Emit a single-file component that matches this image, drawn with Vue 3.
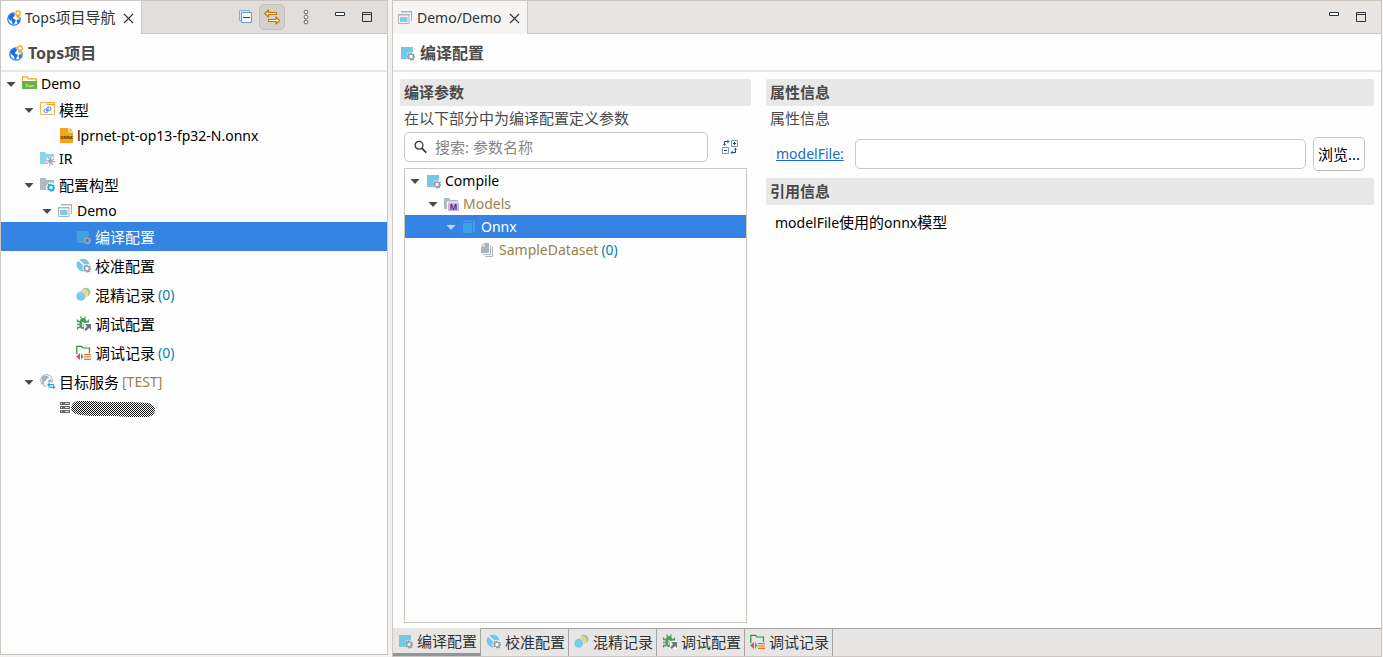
<script setup>
import { ref } from 'vue'

const projectTree = [
  { level: 0, open: true, icon: 'tops', label: 'Demo' },
  { level: 1, open: true, icon: 'model', label: '模型' },
  { level: 2, icon: 'onnx', label: 'lprnet-pt-op13-fp32-N.onnx' },
  { level: 1, icon: 'ir', label: 'IR' },
  { level: 1, open: true, icon: 'config', label: '配置构型' },
  { level: 2, open: true, icon: 'windows', label: 'Demo' },
  { level: 3, icon: 'compile', label: '编译配置', selected: true },
  { level: 3, icon: 'calibrate', label: '校准配置' },
  { level: 3, icon: 'mixed', label: '混精记录', count: '(0)' },
  { level: 3, icon: 'debug', label: '调试配置' },
  { level: 3, icon: 'debuglog', label: '调试记录', count: '(0)' },
  { level: 1, open: true, icon: 'target', label: '目标服务', note: '[TEST]' },
  { level: 2, icon: 'server', label: '', masked: true }
]

const paramTree = [
  { level: 0, open: true, icon: 'compile', label: 'Compile' },
  { level: 1, open: true, icon: 'models', label: 'Models', muted: true },
  { level: 2, open: true, icon: 'cube', label: 'Onnx', selected: true },
  { level: 3, icon: 'dataset', label: 'SampleDataset', muted: true, count: '(0)' }
]

const pages = [
  { icon: 'compile', label: '编译配置' },
  { icon: 'calibrate', label: '校准配置' },
  { icon: 'mixed', label: '混精记录' },
  { icon: 'debug', label: '调试配置' },
  { icon: 'debuglog', label: '调试记录' }
]

const activePage = ref(0)
const search = ref('')
const modelFile = ref('')

const isLatin = (text) => /^[\x00-\x7f]*$/.test(text)
const indent = (level) => ({ paddingLeft: 2 + level * 18 + 'px' })
</script>

<template>
  <div class="workbench">
    <svg class="sprite" aria-hidden="true">
      <defs>
        <symbol id="i-gear" viewBox="0 0 16 16">
          <path fill="currentColor" fill-rule="evenodd" d="M6.5 0h3l.5 2.4 1.5.7 2.2-1.2 2 2.2-1.3 2 .5 1.2 1.1.4v2.8l-2 .5-.6 1.3 1.2 2-2.1 2.1-2-1.2-1.3.6-.6 2h-3L6 13.400l-1.400-.6-2.100 1.200-2-2.100 1.200-2-.4-1.200L0 8V6.300l1.600-.6.6-1.400L1 2.500 3.100.4l1.800 1.500 1.200-.4zM8 4.700a3.300 3.300 0 1 0 0 6.600 3.300 3.300 0 0 0 0-6.600z" />
        </symbol>
        <symbol id="i-globe" viewBox="0 0 16 16">
          <circle cx="8" cy="9" r="6.200" fill="#fff" stroke="#1f7cf0" stroke-width="1.300" />
          <path fill="#1f6fe0" d="M2 7l3-3 2-.8 2 1-.5 2L7 7.500l.3 1.300 2 .5.4 1.500-2 3.600-1.200-.2-.4-3-3-1.900zM11 9.500l2.500-.3-.4 2.500-1.500 1.600-1-1.600z" />
          <path fill="#f5a623" stroke="#fff" stroke-width=".5" d="M12 0a3.200 3.200 0 0 1 3.200 3.300c0 2-1.700 3.300-3.200 6-1.500-2.700-3.200-4-3.200-6A3.200 3.200 0 0 1 12 0z" />
          <circle cx="12" cy="3.300" r="1.500" fill="#fff" />
        </symbol>
        <symbol id="i-tops" viewBox="0 0 16 16">
          <path fill="none" stroke="#f5a623" stroke-width="1.200" d="M.6 5V.900h4.400l1.300 2h8.100V5" />
          <path fill="#6cb33f" d="M0 5h15v8H0z" />
          <text x="7.500" y="10.500" text-anchor="middle" font-size="4" fill="#fff">Tops</text>
        </symbol>
        <symbol id="i-model" viewBox="0 0 16 16">
          <path fill="#fff" stroke="#f5b455" stroke-width="1" d="M.5 12.500V.5h5l1.500 2h7.500v10z" />
          <path fill="#f5a623" d="M6.500 0H15v1.200H6.500zM7 2h8v1.200H7z" />
          <g fill="none" stroke="#3d86e0" stroke-width="1">
            <rect x="4" y="7" width="4" height="3.500" rx="1.700" /><rect x="7" y="5" width="4" height="3.500" rx="1.700" />
            <path d="M6 9l3-2.500" />
          </g>
        </symbol>
        <symbol id="i-onnx" viewBox="0 0 16 16">
          <path fill="#f5a31d" d="M2 0h8.500v4.500H15V15H2z" />
          <path fill="#f5a31d" d="M11.500 0L15 3.500h-3.500z" />
          <text x="8.500" y="10.500" text-anchor="middle" font-size="4" font-weight="700" fill="#3b2b10">ONNX</text>
        </symbol>
        <symbol id="i-ir" viewBox="0 0 16 16">
          <path fill="#8fd3ec" d="M0 1h5l1.500 2H14v10H0z" />
          <circle cx="10.500" cy="10" r="4.500" fill="#fefefe" />
          <g fill="none" stroke="#9aa3aa" stroke-width="1.200">
            <path d="M10.500 10q1-2 0-4.500M10.500 10q2.200-.2 3.500-2.500M10.500 10q1.800 1.200 4.500.5M10.500 10q.2 2.200 2.500 3.700M10.500 10q-1.200 2-.5 4.500M10.500 10q-2.200.3-3.500 2.500M10.500 10q-1.800-1.200-4.500-.5M10.500 10q-.2-2.200-2.500-3.700" />
          </g>
        </symbol>
        <symbol id="i-config" viewBox="0 0 16 16">
          <path fill="#b0bac1" d="M0 1h5l1.500 2H14v10H0z" />
          <circle cx="11" cy="10.500" r="4.900" fill="#fefefe" />
          <use href="#i-gear" x="7" y="6.500" width="8" height="8" color="#29a8e0" />
        </symbol>
        <symbol id="i-windows" viewBox="0 0 16 16">
          <path fill="none" stroke="#a9b4bc" d="M3 1.500h10.500V11" />
          <path fill="none" stroke="#a9b4bc" stroke-width="1" d="M.5 4.500h10.500v9H.5z" />
          <path fill="#a9b4bc" d="M3 1h11v1.500H3zM0 4h11.500v1.500H0z" />
          <path fill="#7ecdea" d="M2 7h7.500v5H2z" />
        </symbol>
        <symbol id="i-compile" viewBox="0 0 16 16">
          <path fill="currentColor" d="M1 2h12v5.500H7.500V14H1z" />
          <use href="#i-gear" x="7" y="7.500" width="8" height="8" color="#98a2aa" />
        </symbol>
        <symbol id="i-calibrate" viewBox="0 0 16 16">
          <path fill="#73c8e8" d="M3.200 1.600Q6 .2 9.500 1.300q3.700 1.600 4 5.500L11.500 9 3.200 1.600z" />
          <path fill="#73c8e8" d="M2 2.600l8.500 8-1.500 3Q5 14 2.200 11-1 6.500 2 2.600z" />
          <circle cx="11" cy="10.500" r="4.500" fill="#fefefe" />
          <path stroke="#fefefe" stroke-width=".8" d="M1.500 1.500L11 10" />
          <use href="#i-gear" x="7" y="6.500" width="8" height="8" color="#98a2aa" />
        </symbol>
        <symbol id="i-mixed" viewBox="0 0 16 16">
          <circle cx="9.800" cy="5.200" r="4.500" fill="#9acb86" />
          <circle cx="7.600" cy="7" r="4.700" fill="#fefefe" />
          <circle cx="7.500" cy="7" r="4.400" fill="#f5c887" />
          <circle cx="5" cy="9" r="4.700" fill="#fefefe" />
          <circle cx="4.800" cy="9.200" r="4.600" fill="#7fcbea" />
        </symbol>
        <symbol id="i-debug" viewBox="0 0 16 16">
          <g stroke="#4c9f5c" stroke-width="1.300" fill="none">
            <path d="M4.500.5L6 3M9.500.5L8.200 3M1.500 3.500v2h2.500M12.500 3.500v2H10M1 8.500h3M1.500 13.500v-2h3M13 7.500h-3" />
          </g>
          <path fill="#4c9f5c" fill-rule="evenodd" d="M3.500 6Q4 2 7 2t3.500 4v1.500H8V13Q3.500 13.500 3.500 9zM6.300 6v5h1.300V6z" />
          <path fill="#fefefe" d="M8 7h7v8H8z" />
          <path fill="#6d7478" d="M9 8h6v6l-1.900-1.900L9.800 15 8.300 13.500 11 10.300z" />
        </symbol>
        <symbol id="i-debuglog" viewBox="0 0 16 16">
          <path fill="none" stroke="#259145" stroke-width="1.200" d="M.8 9V1.300h4.700L7 3h6.500v5" />
          <path fill="#e5486b" d="M4 8v7L0 11.500z" />
          <path fill="#46a85a" d="M5 8v7l2.500-3.500z" />
          <path fill="#ec7422" d="M8 9h7v1.200H8zM8 11.400h7v1.200H8zM8 13.800h7V15H8z" />
        </symbol>
        <symbol id="i-target" viewBox="0 0 16 16">
          <circle cx="6.500" cy="6.500" r="5.900" fill="#fff" stroke="#a9b4bc" />
          <path fill="#a9b4bc" d="M1.500 3.500L4 1.500l4 .5 1 2-2.500 1L6 7 3.500 8 5 11 2 9.500zM8 6.500l3-1.500 1 2.500-2 1.500-2-.5z" />
          <path fill="#fefefe" d="M7 8.500h9V16H7z" />
          <path fill="#2ba3dc" d="M7 10.700L9.500 8.500V10H14v1.300H9.500v1.600zM15.500 13.200L13 11v1.500H8.500v1.300H13v1.600z" />
        </symbol>
        <symbol id="i-server" viewBox="0 0 16 16">
          <path fill="#666" d="M2 2h10v3H2zM2 6h10v3H2zM2 10h10v3H2z" />
          <path fill="#ddd" d="M3 3h1v1H3zM7 3h4v1H7zM3 7h1v1H3zM7 7h4v1H7zM3 11h1v1H3zM7 11h4v1H7z" />
        </symbol>
        <symbol id="i-models" viewBox="0 0 16 16">
          <path fill="#aeb8bf" d="M0 2h5l1.500 2H14v9H0z" />
          <path fill="#fefefe" d="M3 5.500h13V16H3z" />
          <path fill="#cbb2f2" d="M4 6.500h11V15H4z" />
          <text x="9.500" y="13.800" text-anchor="middle" font-size="8" font-weight="600" fill="#35284e">M</text>
        </symbol>
        <symbol id="i-cube" viewBox="0 0 16 16">
          <path fill="currentColor" d="M1 4h9v10H1zM1.500 3L3 1.500h10L10.500 3zM11 4l2-2v10l-2 2z" />
        </symbol>
        <symbol id="i-dataset" viewBox="0 0 16 16">
          <path fill="#a9b4bc" d="M4.500 1H9v10H1V4.500h3.500z" /><path fill="#a9b4bc" d="M1 3.500L3.500 1v2.500z" />
          <path fill="none" stroke="#a9b4bc" d="M10.500 3v9.500H3M12.500 4.500v10H5" />
        </symbol>
        <symbol id="i-collapse" viewBox="0 0 16 16">
          <path fill="#d4edf8" stroke="#6fb7dc" d="M1.500 1.500h10v10h-10z" />
          <path fill="#f4fbff" stroke="#7691b5" d="M3.500 3.500h10v10h-10z" />
          <path fill="#194a8c" d="M5 8h7v1H5z" />
        </symbol>
        <symbol id="i-link" viewBox="0 0 16 16">
          <path fill="#fff3bf" stroke="#b9770e" stroke-width="1.200" stroke-linejoin="round" d="M.8 4.500L4.500 1v2.500h8v2h-8V8zM15.700 11.500L12 8v2.500H4.500v2H12V15z" />
        </symbol>
        <symbol id="i-menu" viewBox="0 0 16 16">
          <g fill="#fff" stroke="#666" stroke-width="1"><circle cx="8" cy="3" r="1.900" /><circle cx="8" cy="8" r="1.900" /><circle cx="8" cy="13" r="1.900" /></g>
        </symbol>
        <symbol id="i-min" viewBox="0 0 16 16"><path fill="#fff" stroke="#2e3436" d="M3.500 3.500h9v3h-9z" /></symbol>
        <symbol id="i-max" viewBox="0 0 16 16"><path fill="none" stroke="#2e3436" d="M3.500 3.500h9v9h-9zM3.500 5.500h9" /></symbol>
        <symbol id="i-close" viewBox="0 0 16 16"><path stroke="#2e3436" stroke-width="1.100" d="M4 4l9 9M13 4l-9 9" /></symbol>
        <symbol id="i-caret" viewBox="0 0 16 16"><path fill="currentColor" d="M3.500 6h9L8 11z" /></symbol>
        <symbol id="i-search" viewBox="0 0 16 16">
          <circle cx="6" cy="6.300" r="3.900" fill="none" stroke="#2e3436" stroke-width="1.300" /><path stroke="#2e3436" stroke-width="1.700" d="M8.800 9.200L13.300 13.700" />
        </symbol>
        <symbol id="i-expand" viewBox="0 0 16 16">
          <path fill="#fff" stroke="#8094b8" d="M9.500 1.500h6v6h-6zM.5 8.500h6v6h-6z" />
          <path fill="none" stroke="#1d3f9a" d="M11 4.500h3M12.500 3v3M2 11.500h3M2.500 6.500v-4H6M13.500 9v4.500H10" />
          <path fill="#2c55b8" d="M5.500.5l2 2-2 2zM1 5h3L2.500 7zM10.500 11.500l-2 2 2 2zM12 10.500h3L13.500 8.500z" />
        </symbol>
      </defs>
    </svg>

    <aside class="pane navigator">
      <div class="strip">
        <div class="tab">
          <svg class="icon"><use href="#i-globe" /></svg>
          <span><span class="latin">Tops</span>项目导航</span>
          <button class="close" aria-label="关闭"><svg class="icon"><use href="#i-close" /></svg></button>
        </div>
        <div class="tools">
          <button class="tool" aria-label="全部折叠"><svg class="icon"><use href="#i-collapse" /></svg></button>
          <button class="tool pressed" aria-label="与编辑器链接" aria-pressed="true"><svg class="icon"><use href="#i-link" /></svg></button>
          <button class="tool spaced" aria-label="视图菜单"><svg class="icon"><use href="#i-menu" /></svg></button>
          <button class="tool spaced" aria-label="最小化"><svg class="icon"><use href="#i-min" /></svg></button>
          <button class="tool" aria-label="最大化"><svg class="icon"><use href="#i-max" /></svg></button>
        </div>
      </div>
      <h1 class="title"><svg class="icon"><use href="#i-globe" /></svg>Tops项目</h1>
      <ul class="tree" role="tree" aria-label="Tops项目">
        <li
          v-for="(row, i) in projectTree"
          :key="i"
          role="treeitem"
          class="row"
          :class="{ tall: !isLatin(row.label), selected: row.selected }"
          :style="indent(row.level)"
        >
          <svg class="icon caret"><use v-if="row.open" href="#i-caret" /></svg>
          <svg class="icon kind"><use :href="'#i-' + row.icon" /></svg>
          <span class="text" :class="{ latin: isLatin(row.label) }">{{ row.label }}</span>
          <span v-if="row.count" class="count">{{ row.count }}</span>
          <span v-if="row.note" class="note">{{ row.note }}</span>
          <svg v-if="row.masked" class="mask" viewBox="0 0 84 18">
            <defs>
              <pattern id="checks" width="2" height="2" patternUnits="userSpaceOnUse">
                <path fill="#111" shape-rendering="crispEdges" d="M0 0h1v1H0zM1 1h1v1H1z" />
              </pattern>
            </defs>
            <path fill="url(#checks)" d="M7 2h15l8 1h30l18 1q6 2 6 7 0 6-8 7H58l-14-1-24 0-10-1Q0 15 0 9q1-6 7-7z" />
          </svg>
        </li>
      </ul>
    </aside>

    <main class="pane editor">
      <div class="strip">
        <div class="tab">
          <svg class="icon"><use href="#i-windows" /></svg>
          <span class="latin">Demo/Demo</span>
          <button class="close" aria-label="关闭"><svg class="icon"><use href="#i-close" /></svg></button>
        </div>
        <div class="tools">
          <button class="tool" aria-label="最小化"><svg class="icon"><use href="#i-min" /></svg></button>
          <button class="tool" aria-label="最大化"><svg class="icon"><use href="#i-max" /></svg></button>
        </div>
      </div>
      <h1 class="title"><svg class="icon kind"><use href="#i-compile" /></svg>编译配置</h1>

      <div class="columns">
        <section class="column">
          <h2 class="section">编译参数</h2>
          <p class="desc">在以下部分中为编译配置定义参数</p>
          <div class="filter">
            <label class="search">
              <svg class="icon"><use href="#i-search" /></svg>
              <input v-model="search" type="text" aria-label="搜索参数名称" placeholder="搜索: 参数名称" />
            </label>
            <button class="expand" aria-label="展开或折叠"><svg class="icon"><use href="#i-expand" /></svg></button>
          </div>
          <ul class="tree params" role="tree" aria-label="编译参数">
            <li
              v-for="row in paramTree"
              :key="row.label"
              role="treeitem"
              class="row"
              :class="{ selected: row.selected }"
              :style="indent(row.level)"
            >
              <svg class="icon caret"><use v-if="row.open" href="#i-caret" /></svg>
              <svg class="icon kind"><use :href="'#i-' + row.icon" /></svg>
              <span class="text latin" :class="{ muted: row.muted }">{{ row.label }}</span>
              <span v-if="row.count" class="count">{{ row.count }}</span>
            </li>
          </ul>
        </section>

        <section class="column">
          <h2 class="section">属性信息</h2>
          <p class="desc">属性信息</p>
          <div class="field">
            <a id="model-file-label" href="#" class="latin">modelFile:</a>
            <input v-model="modelFile" type="text" aria-labelledby="model-file-label" />
            <button class="browse">浏览...</button>
          </div>
          <h2 class="section">引用信息</h2>
          <p class="reference"><span class="latin">modelFile</span>使用的<span class="latin">onnx</span>模型</p>
        </section>
      </div>

      <nav class="pages" role="tablist">
        <button
          v-for="(page, i) in pages"
          :key="page.icon"
          role="tab"
          class="page"
          :class="{ active: i === activePage }"
          :aria-selected="i === activePage"
          @click="activePage = i"
        >
          <svg class="icon kind"><use :href="'#i-' + page.icon" /></svg>{{ page.label }}
        </button>
      </nav>
    </main>
  </div>
</template>

<style>
body {
  background: #f4f2f1;
}
</style>

<style scoped>
.workbench {
  display: flex;
  gap: 4px;
  min-height: 100vh;
  box-sizing: border-box;
  padding-right: 1px;
  font-family: "Noto Sans", "Noto Sans CJK SC", sans-serif;
  font-size: 15px;
  line-height: 22px;
  color: #000;
}
.workbench * {
  box-sizing: border-box;
}
.sprite {
  position: absolute;
  width: 0;
  height: 0;
}
.icon {
  display: block;
  flex: none;
  width: 16px;
  height: 16px;
}
.latin,
.count,
.note {
  font-size: 14px;
}
button,
input {
  font: inherit;
  color: inherit;
}
button {
  padding: 0;
  border: 0;
  background: none;
}
h1,
h2,
p,
ul {
  margin: 0;
  padding: 0;
}
.pane {
  display: flex;
  flex-direction: column;
  border: 1px solid #cdc7c2;
  background: #fefefe;
}
.navigator {
  flex: none;
  width: 388px;
  margin-bottom: 2px;
}
.editor {
  flex: 1;
  min-width: 0;
}
.strip {
  display: flex;
  justify-content: space-between;
  height: 33px;
  background: linear-gradient(#cdc7c2, #cdc7c2) bottom / 100% 1px no-repeat #e1dedb;
}
.editor .strip {
  background-color: #e8e6e5;
}
.tab {
  display: flex;
  align-items: center;
  gap: 3px;
  padding: 0 5px;
  border-right: 1px solid #cdc7c2;
  background: #fefefe;
  color: #2e3436;
}
.editor .tab {
  background: #f6f5f4;
}
.close {
  margin-left: 1px;
}
.tools {
  display: flex;
  align-items: center;
  padding: 0 7px 1px 0;
}
.tool {
  display: grid;
  place-items: center;
  width: 27px;
  height: 26px;
}
.tool.pressed {
  width: 26px;
  border: 1px solid #c6c0bb;
  border-radius: 5px;
  background: #d5d0cc;
}
.tool.spaced {
  margin-left: 7px;
}
.title {
  display: flex;
  align-items: center;
  gap: 4px;
  height: 38px;
  padding: 2px 0 0 7px;
  border-bottom: 2px solid #e8e8e8;
  font-size: 16px;
  color: #4a4a4a;
}
.tree {
  flex: 1;
  list-style: none;
}
.row {
  display: flex;
  align-items: center;
  gap: 3px;
  height: 23px;
  white-space: nowrap;
}
.row.tall {
  height: 29px;
}
.row.selected {
  background: #3584e4;
  color: #fff;
}
.caret {
  color: #4a4a4a;
}
.selected .caret {
  color: #b9d5f6;
}
.kind {
  color: #73c8e8;
}
.selected .kind {
  color: #3fa4de;
}
.muted,
.note {
  color: #9a8149;
}
.count {
  color: #0083ac;
}
.mask {
  width: 84px;
  height: 18px;
  margin-left: -9px;
}
.columns {
  flex: 1;
  display: grid;
  grid-template-columns: 351fr 608fr;
  gap: 15px;
  padding: 7px 7px 5px;
}
.column {
  display: flex;
  flex-direction: column;
  min-width: 0;
}
.section {
  height: 27px;
  padding-left: 4px;
  border-radius: 2px;
  background: #e8e8e8;
  font-size: 15px;
  line-height: 27px;
  color: #4a4a4a;
}
.desc {
  height: 26px;
  padding-left: 4px;
  line-height: 24px;
  color: #4a4a4a;
}
.filter {
  display: flex;
  align-items: center;
  gap: 14px;
  padding: 0 13px 6px 4px;
}
.search {
  flex: 1;
  display: flex;
  align-items: center;
  gap: 6px;
  height: 30px;
  min-width: 0;
  padding-left: 8px;
  border: 1px solid #cdc7c2;
  border-radius: 5px;
  background: #fff;
}
.search input {
  flex: 1;
  min-width: 0;
  padding: 0;
  border: 0;
  outline: 0;
  background: none;
}
.search input::placeholder {
  color: #868686;
}
.params {
  margin: 0 4px;
  border: 1px solid #cdc7c2;
  background: #fefefe;
}
.field {
  display: flex;
  align-items: center;
  gap: 7px;
  padding: 5px 9px 7px 10px;
}
.field a {
  min-width: 72px;
  color: #1b6acb;
}
.field input {
  flex: 1;
  min-width: 0;
  height: 30px;
  padding: 0 8px;
  border: 1px solid #cdc7c2;
  border-radius: 5px;
  background: #fff;
}
.browse {
  width: 52px;
  height: 34px;
  border: 1px solid #cdc7c2;
  border-bottom-color: #bfb8b1;
  border-radius: 5px;
  background: #fefefe;
}
.reference {
  padding: 6px 9px;
}
.pages {
  display: flex;
  height: 28px;
  background: #e8e6e5;
  color: #2e3436;
}
.page {
  display: flex;
  align-items: center;
  gap: 3px;
  padding: 0 3px 2px 5px;
  border-top: 1px solid #a5a5a5;
  border-right: 1px solid #a5a5a5;
}
.page.active {
  padding-bottom: 0;
  border-top-color: transparent;
  border-bottom: 3px solid #8f9699;
}
.pages::after {
  content: "";
  flex: 1;
  border-top: 1px solid #a5a5a5;
}
</style>
